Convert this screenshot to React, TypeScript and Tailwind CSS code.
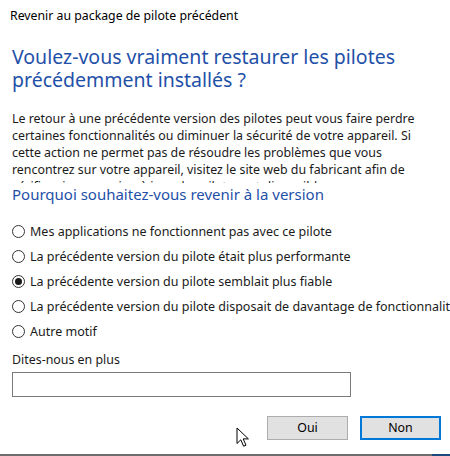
import React from "react";

const reasons = [
  { label: "Mes applications ne fonctionnent pas avec ce pilote", checked: false },
  { label: "La précédente version du pilote était plus performante", checked: false },
  { label: "La précédente version du pilote semblait plus fiable", checked: true },
  { label: "La précédente version du pilote disposait de davantage de fonctionnalités", checked: false },
  { label: "Autre motif", checked: false },
];

const paragraph = [
  "Le retour à une précédente version des pilotes peut vous faire perdre",
  "certaines fonctionnalités ou diminuer la sécurité de votre appareil. Si",
  "cette action ne permet pas de résoudre les problèmes que vous",
  "rencontrez sur votre appareil, visitez le site web du fabricant afin de",
  "vérifier si une version à jour des pilotes est disponible.",
];

const Radio = ({ checked }: { checked: boolean }) => (
  <span className="flex h-[13px] w-[13px] shrink-0 items-center justify-center rounded-full border border-[#333]">
    {checked && <span className="h-[7px] w-[7px] rounded-full bg-[#1a1a1a]" />}
  </span>
);

export default function App() {
  return (
    <div className="relative flex h-[456px] w-[450px] flex-col overflow-hidden bg-white font-['Noto_Sans',sans-serif] text-[#1a1a1a]">
      <div className="pl-[10px] pt-[8px] text-[12.3px] leading-[16px] text-black">
        Revenir au package de pilote précédent
      </div>

      <div className="mt-[21px] pl-[12px] text-[19.5px] leading-[23px] text-[#1f50a8]">
        <div className="whitespace-nowrap">Voulez-vous vraiment restaurer les pilotes</div>
        <div className="whitespace-nowrap">précédemment installés ?</div>
      </div>

      <div className="mt-[19px] h-[73px] overflow-hidden pl-[12px] text-[12.4px] leading-[17px]">
        {paragraph.map((line) => (
          <div key={line} className="whitespace-nowrap">{line}</div>
        ))}
      </div>

      <div className="mt-[1px] pl-[12px] text-[15px] leading-[20px] text-[#1f50a8] whitespace-nowrap">
        Pourquoi souhaitez-vous revenir à la version
      </div>

      <div className="mt-[15px] flex flex-col">
        {reasons.map((r) => (
          <div key={r.label} className="flex h-[25px] items-center gap-[5px] pl-[12px] text-[12.5px] leading-[16px] whitespace-nowrap">
            <Radio checked={r.checked} />
            <span>{r.label}</span>
          </div>
        ))}
      </div>

      <div className="mt-[8px] pl-[12px] text-[12.4px] leading-[16px]">Dites-nous en plus</div>
      <div className="ml-[12px] mt-[4px] h-[25px] w-[339px] border border-[#7a7a7a] bg-white" />

      <div className="mt-[19px] flex justify-end gap-[12px] pr-[9px]">
        <button className="h-[24px] w-[81px] border border-[#adadad] bg-[#e1e1e1] text-[12.4px] text-black">Oui</button>
        <button className="h-[24px] w-[81px] border-2 border-[#0078d7] bg-[#e1e1e1] text-[12.4px] text-black">Non</button>
      </div>

      <div className="mt-auto flex h-[2px]">
        <div className="flex-1 bg-[#6d6d6d]" />
        <div className="w-[18px] bg-[#1b4a7a]" />
      </div>

      <svg className="absolute left-[236px] top-[427px]" width="14" height="21" viewBox="0 0 14 21">
        <path d="M1 1 L1 16.5 L4.8 12.8 L7.6 19.2 L10 18.2 L7.2 11.9 L12.4 11.9 Z" fill="#fff" stroke="#000" strokeWidth="1" strokeLinejoin="round" />
      </svg>
    </div>
  );
}
